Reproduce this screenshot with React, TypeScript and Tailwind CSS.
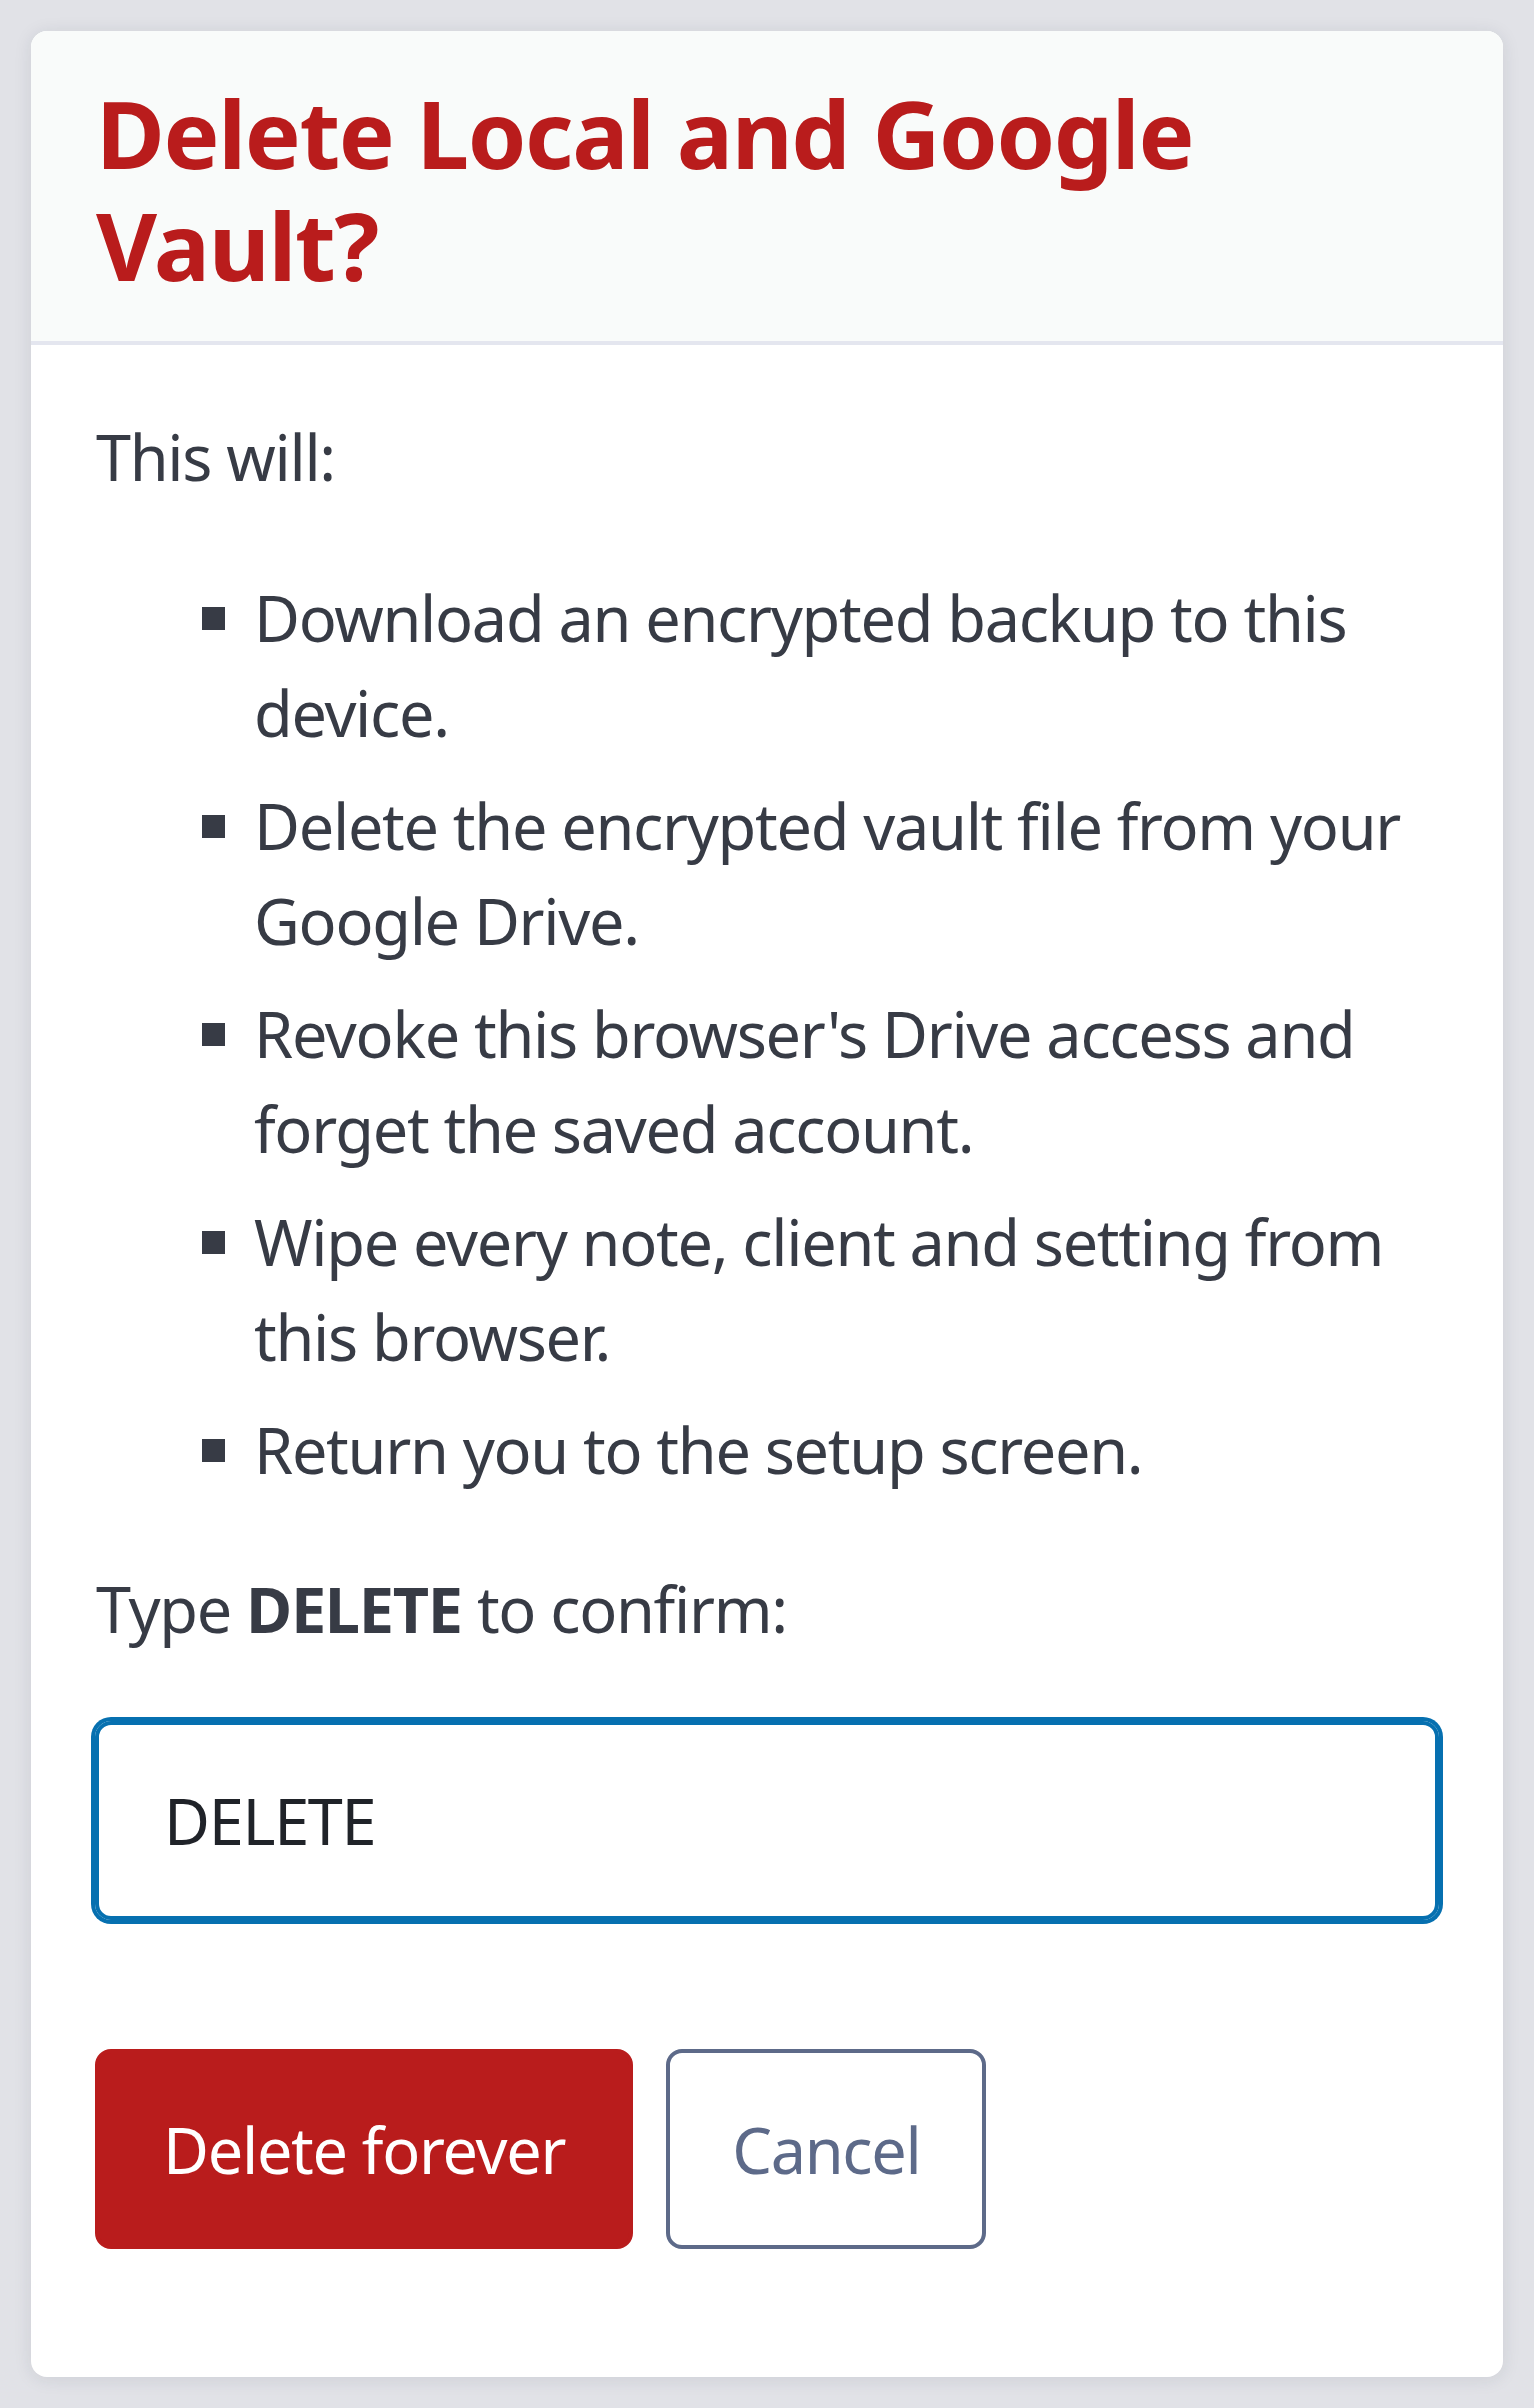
const steps = [
  "Download an encrypted backup to this device.",
  "Delete the encrypted vault file from your Google Drive.",
  "Revoke this browser's Drive access and forget the saved account.",
  "Wipe every note, client and setting from this browser.",
  "Return you to the setup screen.",
];

export default function App() {
  return (
    <div className="min-h-screen bg-[#e1e2e7] p-[31px] font-['Noto_Sans',sans-serif]">
      <div className="overflow-hidden rounded-2xl bg-white shadow-[0_2px_18px_rgba(30,35,60,0.10)]">
        <div className="border-b-4 border-[#e4e6ef] bg-[#f9fbfa] px-[65px] pb-[40px] pt-[46px]">
          <h1 className="text-[94px] font-bold leading-[112px] tracking-[-1.4px] text-[#b91c1c]">
            Delete Local and Google Vault?
          </h1>
        </div>

        <div className="px-[64px] pb-[128px] pt-[64px] text-[63px] leading-[95px] tracking-[-1.3px] text-[#373b45]">
          <p className="pl-[1px]">This will:</p>

          <ul className="mt-[66px] flex flex-col gap-[18px] pl-[107px]">
            {steps.map((s) => (
              <li key={s} className="flex items-start gap-[29px]">
                <span className="mt-[37px] h-[23px] w-[23px] shrink-0 bg-[#373b45]" />
                <span>{s}</span>
              </li>
            ))}
          </ul>

          <p className="mt-[64px] pl-[1px]">
            Type <b className="font-bold">DELETE</b> to confirm:
          </p>

          <input
            type="text"
            defaultValue="DELETE"
            className="mt-[65px] h-[199px] w-full rounded-[16px] border-4 border-[#0670b0] px-[65px] text-[63px] tracking-[-1.3px] text-[#202329] outline-none ring-4 ring-[#0670b0]"
          />

          <div className="mt-[129px] flex gap-[33px]">
            <button className="h-[200px] rounded-[16px] border-4 border-[#b91c1c] bg-[#b91c1c] px-[64px] text-white">
              Delete forever
            </button>
            <button className="h-[200px] rounded-[16px] border-4 border-[#5d6a89] bg-white px-[62px] text-[#5d6a89]">
              Cancel
            </button>
          </div>
        </div>
      </div>
    </div>
  );
}
